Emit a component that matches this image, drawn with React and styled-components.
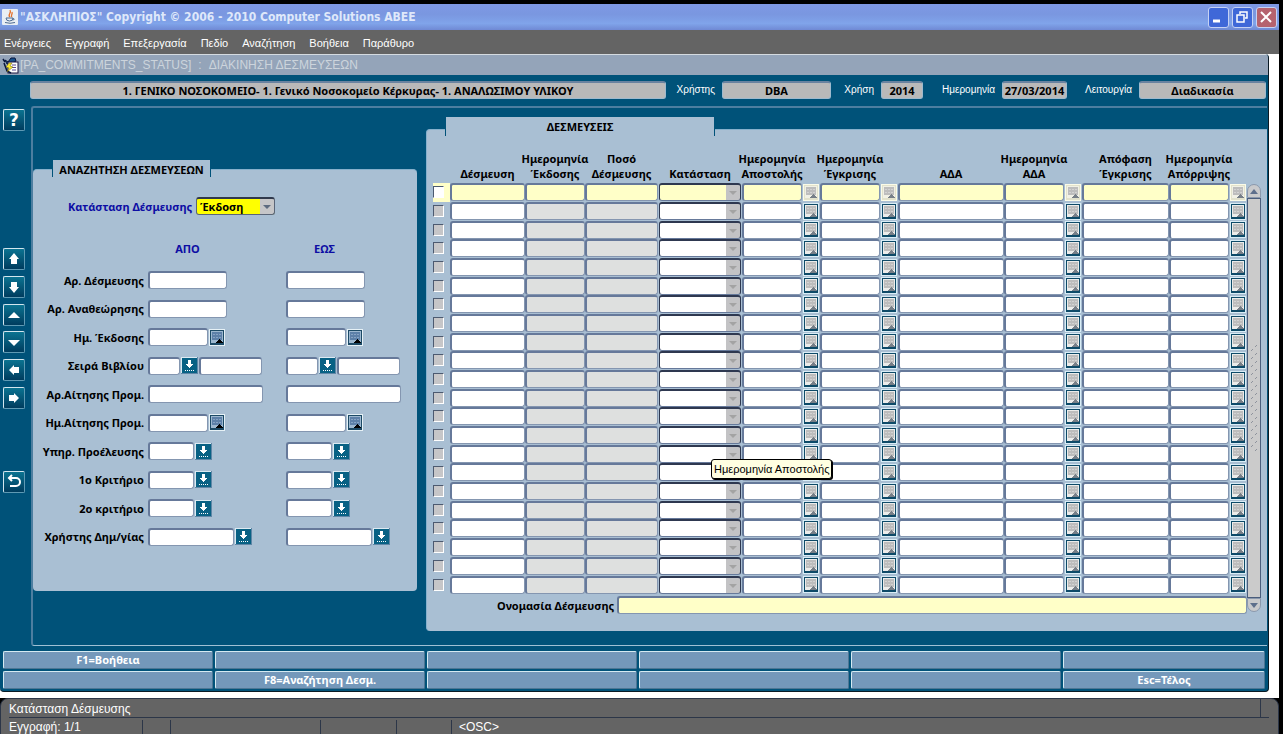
import React, {useState} from 'react';
import styled, {createGlobalStyle, css} from 'styled-components';

const menuItems = ['Ενέργειες', 'Εγγραφή', 'Επεξεργασία', 'Πεδίο', 'Αναζήτηση', 'Βοήθεια', 'Παράθυρο'];

const tools = [
    {name: 'help', label: 'Βοήθεια', gap: 0},
    {name: 'up', label: 'Προηγούμενη εγγραφή', gap: 117},
    {name: 'down', label: 'Επόμενη εγγραφή', gap: 6},
    {name: 'pageUp', label: 'Προηγούμενη σελίδα', gap: 6},
    {name: 'pageDown', label: 'Επόμενη σελίδα', gap: 5},
    {name: 'left', label: 'Προηγούμενο πεδίο', gap: 6},
    {name: 'right', label: 'Επόμενο πεδίο', gap: 6},
    {name: 'back', label: 'Επιστροφή', gap: 62},
];

const criteria = [
    {label: 'Αρ. Δέσμευσης', parts: [79]},
    {label: 'Αρ. Αναθεώρησης', parts: [79]},
    {label: 'Ημ. Έκδοσης', parts: [60, 'date']},
    {label: 'Σειρά Βιβλίου', parts: [32, 'list', 63]},
    {label: 'Αρ.Αίτησης Προμ.', parts: [115]},
    {label: 'Ημ.Αίτησης Προμ.', parts: [60, 'date']},
    {label: 'Υπηρ. Προέλευσης', parts: [46, 'list']},
    {label: '1ο Κριτήριο', parts: [46, 'list']},
    {label: '2ο κριτήριο', parts: [46, 'list']},
    {label: 'Χρήστης Δημ/γίας', parts: [86, 'list']},
];

const columns = [
    {title: ['Δέσμευση'], width: 75},
    {title: ['Ημερομηνία', 'Έκδοσης'], width: 60, readOnly: true},
    {title: ['Ποσό', 'Δέσμευσης'], width: 73, readOnly: true},
    {title: ['Κατάσταση'], width: 84, type: 'select'},
    {title: ['Ημερομηνία', 'Αποστολής'], width: 78, type: 'date'},
    {title: ['Ημερομηνία', 'Έγκρισης'], width: 78, type: 'date'},
    {title: ['ΑΔΑ'], width: 106},
    {title: ['Ημερομηνία', 'ΑΔΑ'], width: 78, type: 'date'},
    {title: ['Απόφαση', 'Έγκρισης'], width: 87},
    {title: ['Ημερομηνία', 'Απόρριψης'], width: 78, type: 'date'},
];

const rows = Array.from({length: 22}, (_, i) => i);

const functionKeys = [
    'F1=Βοήθεια', '', '', '', '', '',
    '', 'F8=Αναζήτηση Δεσμ.', '', '', '', 'Esc=Τέλος',
];

const toolPaths = {
    up: 'M8 2 L13 8 H11 V13 H5 V8 H3 Z',
    down: 'M5 3 H11 V8 H13 L8 14 L3 8 H5 Z',
    pageUp: 'M8 5 L14 11 H2 Z',
    pageDown: 'M2 6 H14 L8 12 Z',
    left: 'M3 8 L8 3 V5 H13 V11 H8 V13 Z',
    right: 'M13 8 L8 3 V5 H3 V11 H8 V13 Z',
};

const ToolIcon = ({name}) => {
    if (name === 'help') return <HelpMark>?</HelpMark>;
    return (
        <svg width='16' height='16' viewBox='0 0 16 16' aria-hidden='true'>
            {name === 'back'
                ? <path d='M3 4 H10 A4 4 0 0 1 10 12 H4 M6 1 L3 4 L6 7' fill='none' stroke='#fff' strokeWidth='2' />
                : <path d={toolPaths[name]} fill='#fff' />}
        </svg>
    );
};

const iconTones = {
    normal: {light: '#e6f1f6', edge: '#1c4a66', face: '#9db8d0', sheet: '#5d80a8', line: '#86a3c4', arrow: '#000'},
    idle: {light: '#d9edf6', edge: '#0d4a68', face: '#ececea', sheet: '#bdbdbd', line: '#d3d3d3', arrow: '#777f88'},
    active: {light: '#fbfbe8', edge: '#e2e2cc', face: '#f1f1e6', sheet: '#bdbdbd', line: '#d3d3d3', arrow: '#777f88'},
};

const CalendarIcon = ({tone = 'normal'}) => {
    const c = iconTones[tone];
    return (
        <svg width='16' height='17' viewBox='0 0 16 17' shapeRendering='crispEdges' aria-hidden='true'>
            <rect width='16' height='17' fill={c.light} />
            <rect x='1' y='1' width='14' height='15' fill={c.edge} />
            <rect x='2' y='2' width='12' height='12' fill={c.face} />
            <rect x='3' y='3' width='10' height='8' fill={c.sheet} />
            <path d='M4 5.5 H12 M4 8.5 H12' stroke={c.line} strokeDasharray='2 1' />
            <path d='M7 14 L10.500 10 L14 14 Z' fill={c.arrow} />
        </svg>
    );
};

const ListIcon = () => (
    <svg width='17' height='17' viewBox='0 0 17 17' shapeRendering='crispEdges' aria-hidden='true'>
        <rect width='17' height='17' fill='#5f86a6' />
        <rect width='16' height='16' fill='#dceaf2' />
        <rect x='1' y='1' width='15' height='15' fill='#086184' />
        <path d='M7 3 H10 V7 H12 L8.5 11 L5 7 H7 Z' fill='#fff' />
        <path d='M4 13.5 H14' stroke='#fff' strokeDasharray='1 1' />
    </svg>
);

const JavaIcon = () => (
    <svg width='16' height='16' viewBox='0 0 16 16' aria-hidden='true'>
        <rect width='16' height='16' rx='1' fill='#e9eef4' />
        <path d='M8 8 C5 6 10 4 8 1 M10 8 C8 7 11 5 10 3' fill='none' stroke='#e4702a' strokeWidth='1.3' />
        <path d='M4 9 H11 Q11 12 7.500 12 Q4 12 4 9 Z M11 9.500 Q13.500 9.500 11 11.500 M3 13.500 Q8 15 13 13.500' fill='none' stroke='#4d6a90' />
    </svg>
);

const FormIcon = () => (
    <svg width='17' height='17' viewBox='0 0 17 17' aria-hidden='true'>
        <path d='M3 3 L6 5 L9 1 L13 1 L14 4 L11 6 L5 7 Z' fill='#16508c' stroke='#08163c' />
        <rect x='6' y='5' width='10' height='11' fill='#fff' stroke='#1a1440' />
        <path d='M10 8 H14 M10 10.500 H14 M10 13 H14' stroke='#5a4a90' />
        <path d='M1 2 L3 5 M2 6 L5 14 L9 16' stroke='#08163c' strokeWidth='1.500' fill='none' />
        <path d='M7 6 L4 10 L7 11 L5 15 L11 10 L8 9 L10 6 Z' fill='#f8e830' stroke='#6a5a10' strokeWidth='.5' />
    </svg>
);

const FieldParts = ({parts, label}) => (
    <Parts>
        {parts.map((part, i) => {
            if (part === 'date') return <IconButton key={i} type='button' aria-label={`${label} ημερολόγιο`}><CalendarIcon /></IconButton>;
            if (part === 'list') return <IconButton key={i} type='button' aria-label={`${label} λίστα`}><ListIcon /></IconButton>;
            return <Field key={i} $width={part} aria-label={label} />;
        })}
    </Parts>
);

const GridCell = ({column, active, tip}) => {
    const label = column.title.join(' ');
    if (column.type === 'select') {
        return (
            <td>
                <SelectBox $grid>
                    <GridSelect $active={active} disabled={!active} aria-label={label}><option></option></GridSelect>
                </SelectBox>
            </td>
        );
    }
    return (
        <td>
            <CellBox>
                <GridInput $active={active} $readOnly={column.readOnly} readOnly={column.readOnly} aria-label={label} />
                {column.type === 'date' &&
                    <IconButton type='button' $grid aria-label={`${label} ημερολόγιο`}>
                        <CalendarIcon tone={active ? 'active' : 'idle'} />
                    </IconButton>}
                {tip && <Tooltip role='tooltip'>{tip}</Tooltip>}
            </CellBox>
        </td>
    );
};

const App = () => {
    const [status, setStatus] = useState('Έκδοση');

    return (
        <>
            <GlobalStyle />
            <Screen>
                <TitleBar>
                    <JavaIcon />
                    <h1>"ΑΣΚΛΗΠΙΟΣ" Copyright © 2006 - 2010 Computer Solutions ΑΒΕΕ</h1>
                    <WindowButton type='button' aria-label='Ελαχιστοποίηση'>
                        <svg width='18' height='18' viewBox='0 0 18 18'><path d='M4 13 H11' stroke='#fff' strokeWidth='3' /></svg>
                    </WindowButton>
                    <WindowButton type='button' aria-label='Επαναφορά'>
                        <svg width='18' height='18' viewBox='0 0 18 18' fill='none' stroke='#fff'>
                            <path d='M7 6 V4 H14 V10 H12' strokeWidth='1.500' />
                            <rect x='4' y='7' width='7' height='7' strokeWidth='1.500' />
                        </svg>
                    </WindowButton>
                    <WindowButton type='button' $close aria-label='Κλείσιμο'>
                        <svg width='18' height='18' viewBox='0 0 18 18'><path d='M4 4 L14 14 M14 4 L4 14' stroke='#fff' strokeWidth='2' /></svg>
                    </WindowButton>
                </TitleBar>
                <MenuBar>
                    {menuItems.map(item => <a href='#menu' key={item}>{item}</a>)}
                </MenuBar>
                <Desktop>
                    <FormWindow>
                        <FormTitle>
                            <FormIcon />
                            <span>[PA_COMMITMENTS_STATUS]</span>
                            <span>:</span>
                            <span>ΔΙΑΚΙΝΗΣΗ ΔΕΣΜΕΥΣΕΩΝ</span>
                        </FormTitle>
                        <InfoBar>
                            <InfoValue $grow>1. ΓΕΝΙΚΟ ΝΟΣΟΚΟΜΕΙΟ- 1. Γενικό Νοσοκομείο Κέρκυρας- 1. ΑΝΑΛΩΣΙΜΟΥ ΥΛΙΚΟΥ</InfoValue>
                            <InfoLabel $width={56}>Χρήστης</InfoLabel>
                            <InfoValue $width={109}>DBA</InfoValue>
                            <InfoLabel $width={50}>Χρήση</InfoLabel>
                            <InfoValue $width={42}>2014</InfoValue>
                            <InfoLabel $width={79}>Ημερομηνία</InfoLabel>
                            <InfoValue $width={65}>27/03/2014</InfoValue>
                            <InfoLabel $width={72}>Λειτουργία</InfoLabel>
                            <InfoValue $width={127}>Διαδικασία</InfoValue>
                        </InfoBar>
                        <Workspace>
                            <Toolbar>
                                {tools.map(tool => (
                                    <ToolButton key={tool.name} type='button' $gap={tool.gap} aria-label={tool.label}>
                                        <ToolIcon name={tool.name} />
                                    </ToolButton>
                                ))}
                            </Toolbar>
                            <Frame>
                                <SearchPanel>
                                    <PanelTab>ΑΝΑΖΗΤΗΣΗ ΔΕΣΜΕΥΣΕΩΝ</PanelTab>
                                    <StatusRow>
                                        <label htmlFor='status'>Κατάσταση Δέσμευσης</label>
                                        <SelectBox $width={79}>
                                            <StatusSelect id='status' value={status} onChange={(e) => setStatus(e.target.value)}>
                                                <option>Έκδοση</option>
                                                <option>Αποστολή</option>
                                                <option>Έγκριση</option>
                                                <option>Απόρριψη</option>
                                            </StatusSelect>
                                        </SelectBox>
                                    </StatusRow>
                                    <RangeHeads>
                                        <span>ΑΠΟ</span>
                                        <span>ΕΩΣ</span>
                                    </RangeHeads>
                                    <Criteria>
                                        {criteria.map(({label, parts}) => (
                                            <React.Fragment key={label}>
                                                <span>{label}</span>
                                                <FieldParts parts={parts} label={`${label} από`} />
                                                <FieldParts parts={parts} label={`${label} έως`} />
                                            </React.Fragment>
                                        ))}
                                    </Criteria>
                                </SearchPanel>
                                <ResultsPanel>
                                    <PanelTab $wide>ΔΕΣΜΕΥΣΕΙΣ</PanelTab>
                                    <ResultsBody>
                                        <ResultsMain>
                                            <Table>
                                                <colgroup>
                                                    <Col $width={17} />
                                                    {columns.map((c, i) => <Col key={i} $width={c.width} />)}
                                                </colgroup>
                                                <thead>
                                                    <tr>
                                                        <th></th>
                                                        {columns.map((c, i) => (
                                                            <Head key={i} $date={c.type === 'date'}>
                                                                {c.title.map(line => <span key={line}>{line}</span>)}
                                                            </Head>
                                                        ))}
                                                    </tr>
                                                </thead>
                                                <tbody>
                                                    {rows.map(r => (
                                                        <tr key={r}>
                                                            <CheckCell $active={r === 0}>
                                                                <Check type='checkbox' $active={r === 0} aria-label={`Επιλογή ${r + 1}`} />
                                                            </CheckCell>
                                                            {columns.map((c, i) => (
                                                                <GridCell
                                                                    key={i}
                                                                    column={c}
                                                                    active={r === 0}
                                                                    tip={r === 14 && i === 4 && 'Ημερομηνία Αποστολής'}
                                                                />
                                                            ))}
                                                        </tr>
                                                    ))}
                                                </tbody>
                                            </Table>
                                            <NameRow>
                                                <label htmlFor='name'>Ονομασία Δέσμευσης</label>
                                                <NameField id='name' readOnly />
                                            </NameRow>
                                        </ResultsMain>
                                        <ScrollBar>
                                            <ScrollButton type='button' aria-label='Πάνω'>
                                                <svg width='8' height='5' viewBox='0 0 8 5'><path d='M4 0 L8 5 H0 Z' fill='#5d6f8c' /></svg>
                                            </ScrollButton>
                                            <Track><Grip /></Track>
                                            <ScrollButton type='button' $bottom aria-label='Κάτω'>
                                                <svg width='8' height='5' viewBox='0 0 8 5'><path d='M0 0 H8 L4 5 Z' fill='#5d6f8c' /></svg>
                                            </ScrollButton>
                                        </ScrollBar>
                                    </ResultsBody>
                                </ResultsPanel>
                            </Frame>
                        </Workspace>
                        <KeyBar>
                            {functionKeys.map((key, i) => <KeyButton key={i} type='button' aria-label={key || 'Κενό'}>{key}</KeyButton>)}
                        </KeyBar>
                    </FormWindow>
                </Desktop>
                <StatusBar>
                    <StatusLine>Κατάσταση Δέσμευσης</StatusLine>
                    <StatusCells>
                        <span>Εγγραφή: 1/1</span>
                        <span></span>
                        <span></span>
                        <span></span>
                        <span></span>
                        <span>&lt;OSC&gt;</span>
                    </StatusCells>
                </StatusBar>
            </Screen>
        </>
    );
}

const GlobalStyle = createGlobalStyle`
    * {
        box-sizing: border-box;
    }
    body {
        margin: 0;
        background: #000;
        overflow: hidden;
        font-family: 'Noto Sans', 'Open Sans', sans-serif;
        font-size: 11px;
    }
    button, input, select {
        font: inherit;
        margin: 0;
        padding: 0;
    }
    h1, h2 {
        margin: 0;
    }
    svg {
        display: block;
    }
`

const Screen = styled.div`
    padding: 4px 4px 0 0;
`

const TitleBar = styled.header`
    display: flex;
    align-items: center;
    gap: 2px;
    height: 26px;
    padding: 0 2px;
    background: linear-gradient(#7e98e4, #7a97e0 40%, #80a4ea 75%, #7089d4);
    h1 {
        flex: 1;
        color: #dfe8fa;
        font-family: 'DejaVu Sans Condensed', 'DejaVu Sans', sans-serif;
        font-size: 12px;
        font-weight: bold;
        white-space: nowrap;
    }
`

const WindowButton = styled.button`
    width: 21px;
    height: 21px;
    margin-left: 1px;
    border: 1px solid #c6d2f4;
    border-radius: 3px;
    background: ${({$close}) => $close ? '#b5626e' : '#3f68d8'};
`

const MenuBar = styled.nav`
    display: flex;
    align-items: center;
    gap: 14px;
    height: 24px;
    padding: 2px 4px 0;
    background: #646464;
    a {
        color: #fff;
        font-family: 'Liberation Sans', sans-serif;
        font-size: 11px;
        text-decoration: none;
    }
`

const Desktop = styled.main`
    padding: 0 10px 6px 0;
    background: #fff;
`

const FormWindow = styled.section`
    padding-bottom: 2px;
    border-right: 1px solid #0a1a24;
    border-bottom: 1px solid #0a1a24;
    border-radius: 0 4px 4px 4px;
    overflow: hidden;
    background: #005279;
`

const FormTitle = styled.div`
    display: flex;
    align-items: center;
    gap: 7px;
    height: 21px;
    padding-left: 2px;
    border-top: 1px solid #d5dbe0;
    background: #94a4b9;
    color: #ccd4dc;
    font-family: 'Liberation Sans', sans-serif;
    font-size: 12px;
    svg + span {
        margin-left: -6px;
    }
`

const InfoBar = styled.div`
    display: flex;
    align-items: center;
    height: 31px;
    padding: 0 2px 2px 30px;
`

const InfoLabel = styled.span`
    width: ${({$width}) => $width}px;
    padding-right: 7px;
    color: #fff;
    font-family: 'Liberation Sans', sans-serif;
    font-size: 10px;
    text-align: right;
`

const InfoValue = styled.output`
    ${({$grow, $width}) => $grow ? css`flex: 1;` : css`width: ${$width}px;`}
    height: 18px;
    border: 1px solid #9fbace;
    border-top: 2px solid #6a83a0;
    border-radius: 3px;
    background: #b9b9b9;
    font-weight: bold;
    line-height: 16px;
    text-align: center;
    white-space: nowrap;
`

const Workspace = styled.div`
    display: flex;
`

const Toolbar = styled.div`
    display: flex;
    flex-direction: column;
    width: 31px;
    padding: 3px 3px 0;
`

const ToolButton = styled.button`
    display: flex;
    align-items: center;
    justify-content: center;
    width: 22px;
    height: 22px;
    margin-top: ${({$gap}) => $gap}px;
    border: 1px solid #5f9ab4;
    border-top-color: #d3e6ee;
    border-left-color: #d3e6ee;
    border-radius: 2px;
    background: linear-gradient(#0b7391, #003c5e);
`

const HelpMark = styled.span`
    color: #fff;
    font-family: 'DejaVu Sans', sans-serif;
    font-size: 17px;
    font-weight: bold;
    line-height: 18px;
`

const Frame = styled.div`
    flex: 1;
    display: flex;
    align-items: flex-start;
    gap: 9px;
    height: 540px;
    margin-right: 1px;
    border: 2px solid #4d7ea0;
    border-right: none;
    border-bottom: 1px solid #9fc0d4;
    border-radius: 3px 0 0 3px;
`

const SearchPanel = styled.section`
    width: 384px;
    height: 422px;
    margin-top: 61px;
    border-top: 1px solid #86b0cc;
    border-radius: 4px;
    background: #a9bfd3;
`

const ResultsPanel = styled.section`
    flex: 1;
    height: 502px;
    margin-top: 21px;
    border-top: 1px solid #86b0cc;
    border-left: 1px solid #86b0cc;
    border-radius: 4px 0 0 4px;
    background: #a9bfd3;
`

const PanelTab = styled.h2`
    width: ${({$wide}) => $wide ? 270 : 159}px;
    height: ${({$wide}) => $wide ? 19 : 17}px;
    margin: ${({$wide}) => $wide ? '-13px 0 0 18px' : '-10px 0 0 19px'};
    border: 1px solid #005279;
    border-top: none;
    border-bottom: none;
    background: #a9bfd3;
    font-size: 11px;
    font-weight: bold;
    line-height: 20px;
    text-align: center;
`

const StatusRow = styled.div`
    display: flex;
    align-items: center;
    gap: 4px;
    margin: 20px 0 0 35px;
    color: #0d0da4;
    font-weight: bold;
    label {
        width: 124px;
        text-align: right;
        white-space: nowrap;
    }
`

const SelectBox = styled.div`
    position: relative;
    width: ${({$width}) => $width ? `${$width}px` : 'auto'};
    margin-left: ${({$grid}) => $grid ? 1 : 0}px;
    margin-right: ${({$grid}) => $grid ? 1 : 0}px;
    &::after {
        content: '';
        position: absolute;
        top: 8px;
        right: 4px;
        border: 4px solid transparent;
        border-top-color: ${({$grid}) => $grid ? '#a3a3a3' : '#5d6b80'};
        border-bottom: none;
        pointer-events: none;
    }
`

const StatusSelect = styled.select`
    display: block;
    appearance: none;
    width: 100%;
    height: 18px;
    padding-left: 3px;
    border: 1px solid #5a6578;
    border-top: 2px solid #30394c;
    border-radius: 3px;
    background: linear-gradient(#c6c6c8, #c6c6c8) right / 14px 100% no-repeat #ff0;
    color: #000;
    font-weight: bold;
    outline: none;
`

const RangeHeads = styled.div`
    display: grid;
    grid-template-columns: 79px 79px;
    gap: 58px;
    margin: 26px 0 0 115px;
    color: #0d0da4;
    font-weight: bold;
    line-height: 15px;
    text-align: center;
`

const Criteria = styled.div`
    display: grid;
    grid-template-columns: 111px 134px 1fr;
    grid-template-rows: repeat(10, 1fr);
    column-gap: 4px;
    align-items: center;
    height: 285px;
    margin-top: 10px;
    font-weight: bold;
    > span {
        text-align: right;
        white-space: nowrap;
    }
`

const Parts = styled.div`
    display: flex;
    align-items: center;
    gap: 1px;
`

const fieldLook = css`
    border: 2px solid #66799a;
    border-right: 1px solid #8496b0;
    border-bottom: 1px solid #8496b0;
    border-radius: 3px;
    background: #fff;
    outline: none;
`

const Field = styled.input`
    ${fieldLook}
    width: ${({$width}) => $width}px;
    height: 18px;
`

const IconButton = styled.button`
    flex: none;
    border: none;
    background: none;
    margin-right: ${({$grid}) => $grid ? 1 : 0}px;
`

const ResultsBody = styled.div`
    display: flex;
    padding: 0 6px;
`

const ResultsMain = styled.div`
    flex: 1;
`

const Table = styled.table`
    width: 100%;
    border-collapse: collapse;
    table-layout: fixed;
    thead tr {
        height: 47px;
    }
    th, td {
        padding: 0;
    }
    tbody {
        height: 411px;
    }
    tbody tr {
        height: calc(411px / 22);
    }
`

const Col = styled.col`
    width: ${({$width}) => $width}px;
`

const Head = styled.th`
    line-height: 15px;
    vertical-align: bottom;
    span {
        display: block;
        margin: 0 ${({$date}) => $date ? '14px 0 -4px' : '-4px'};
        white-space: nowrap;
    }
    && {
        padding-bottom: 2px;
    }
`

const CheckCell = styled.td`
    background: ${({$active}) => $active ? '#ffffc8' : 'transparent'};
`

const Check = styled.input`
    display: block;
    appearance: none;
    width: 11px;
    height: 12px;
    border: 1px solid #4c5a70;
    border-right-color: #fff;
    border-bottom-color: #fff;
    background: ${({$active}) => $active ? '#fff' : '#c6c6c8'};
`

const CellBox = styled.div`
    position: relative;
    display: flex;
    align-items: center;
    gap: 1px;
`

const cellColor = ({$active, $readOnly}) => {
    if ($active) return '#ffffc8';
    return $readOnly ? '#dee0df' : '#fff';
};

const GridInput = styled.input`
    ${fieldLook}
    flex: 1;
    min-width: 0;
    height: 18px;
    background: ${cellColor};
`

const GridSelect = styled.select`
    display: block;
    appearance: none;
    width: 100%;
    height: 18px;
    border: 1px solid #2e3850;
    border-top-width: 2px;
    border-bottom-color: #66799a;
    border-radius: 3px;
    background: linear-gradient(#c3c3c5, #c3c3c5) right / 14px 100% no-repeat ${cellColor};
    opacity: 1;
`

const Tooltip = styled.span`
    position: absolute;
    z-index: 2;
    top: 14px;
    left: -31px;
    height: 20px;
    padding: 0 2px;
    border: 1px solid #000;
    border-radius: 3px;
    box-shadow: 1px 1px 0 #000;
    background: #ffffe1;
    font-family: 'Liberation Sans', sans-serif;
    font-size: 11px;
    line-height: 19px;
    white-space: nowrap;
`

const NameRow = styled.div`
    display: flex;
    align-items: center;
    gap: 4px;
    margin-top: 2px;
    padding-left: 64px;
    font-weight: bold;
    label {
        width: 116px;
        text-align: right;
        white-space: nowrap;
    }
`

const NameField = styled.input`
    ${fieldLook}
    flex: 1;
    height: 18px;
    background: #ffffc8;
`

const ScrollBar = styled.div`
    display: flex;
    flex-direction: column;
    width: 14px;
    height: 428px;
    margin-top: 48px;
`

const ScrollButton = styled.button`
    display: flex;
    align-items: center;
    justify-content: center;
    height: 14px;
    border: 1px solid #8a98ac;
    border-radius: ${({$bottom}) => $bottom ? '0 0 7px 7px' : '7px 7px 0 0'};
    background: #c9cacc;
`

const Track = styled.div`
    flex: 1;
    display: flex;
    align-items: center;
    justify-content: center;
    border: 1px solid #4a5d7c;
    background: #cbcbcb;
`

const Grip = styled.div`
    width: 8px;
    height: 106px;
    background:
        linear-gradient(135deg, transparent 1px, #8e939c 1px 2px, transparent 2px) 5px 0 / 8px 8px,
        linear-gradient(135deg, transparent 1px, #8e939c 1px 2px, transparent 2px) 1px 4px / 8px 8px;
`

const KeyBar = styled.div`
    display: grid;
    grid-template-columns: repeat(5, 210fr) 202fr;
    gap: 2px;
    padding: 5px 3px 0;
`

const KeyButton = styled.button`
    height: 18px;
    border: 1px solid #4d7694;
    border-top-color: #d5eaf2;
    border-left-color: #d5eaf2;
    border-radius: 2px;
    background: #7498ba;
    color: #fff;
    font-weight: bold;
    line-height: 16px;
`

const StatusBar = styled.footer`
    padding: 0 2px 0 1px;
    border: 1px solid #2c3648;
    border-radius: 8px 8px 0 0;
    background: #646464;
    color: #fff;
    font-family: 'Liberation Sans', sans-serif;
    font-size: 12px;
    > div {
        margin: 0 7px;
    }
`

const StatusLine = styled.div`
    height: 19px;
    border-bottom: 1px solid #2c3648;
    line-height: 20px;
    &::after {
        content: '';
        float: right;
        width: 8px;
        height: 18px;
        border-left: 1px solid #2c3648;
    }
`

const StatusCells = styled.div`
    display: grid;
    grid-template-columns: 133px 28px 150px 76px 55px 1fr;
    height: 20px;
    line-height: 18px;
    span + span {
        height: 14px;
        margin-top: 2px;
        padding-left: 7px;
        border-left: 1px solid #2c3648;
        line-height: 14px;
    }
`

export default App;
